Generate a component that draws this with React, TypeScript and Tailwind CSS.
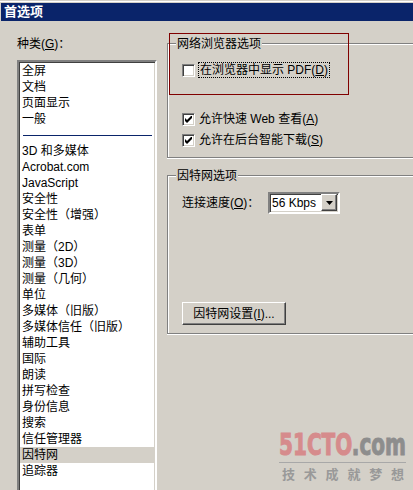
import type { ReactNode } from 'react'

const categories = [
  '3D 和多媒体',
  'Acrobat.com',
  'JavaScript',
  '安全性',
  '安全性（增强）',
  '表单',
  '测量（2D）',
  '测量（3D）',
  '测量（几何）',
  '单位',
  '多媒体（旧版）',
  '多媒体信任（旧版）',
  '辅助工具',
  '国际',
  '朗读',
  '拼写检查',
  '身份信息',
  '搜索',
  '信任管理器',
  '因特网',
  '追踪器',
]

const topCategories = ['全屏', '文档', '页面显示', '一般']

export default function App() {
  return (
    <div className="relative w-[413px] h-[490px] overflow-hidden bg-[#d4d0c8] text-black text-[12px] leading-[16px] font-['Liberation_Sans','Noto_Sans_CJK_SC',sans-serif]">
      {/* 窗口顶部 */}
      <div className="h-[1px]" />
      <div className="h-[1px] bg-white" />
      <div className="h-[1px]" />
      <div className="ml-[1px] h-[18px] bg-[#0a246a] pl-[3px] flex items-center text-white font-bold text-[13px]">
        首选项
      </div>

      <div className="flex">
        {/* 左侧：种类列表 */}
        <div className="w-[167px] shrink-0 pl-[17px]">
          <div className="mt-[17px] leading-[12px]">
            种类(<u className="underline-offset-1">G</u>)：
          </div>
          <div className="mt-[10px] w-[140px] h-[440px] bg-white border-2 border-t-[#808080] border-l-[#808080] border-r-white border-b-white shadow-[inset_1px_1px_0_#404040,inset_-1px_-1px_0_#d4d0c8]">
            <div className="pt-[1px] pl-[1px]">
              {topCategories.map((c) => (
                <ListRow key={c}>{c}</ListRow>
              ))}
              <div className="h-[16px] flex items-center px-[3px]">
                <div className="h-[1px] w-full bg-[#0a246a]" />
              </div>
              {categories.map((c) => (
                <ListRow key={c} selected={c === '因特网'}>
                  {c}
                </ListRow>
              ))}
            </div>
          </div>
        </div>

        {/* 右侧：选项 */}
        <div className="mt-[22px] w-[270px] shrink-0">
          <GroupBox title="网络浏览器选项" className="h-[115px]">
            <CheckRow className="mt-[11px]" focused>
              在浏览器中显示 PDF(<u className="underline-offset-1">D</u>)
            </CheckRow>
            <CheckRow className="mt-[33px]" checked>
              允许快速 Web 查看(<u className="underline-offset-1">A</u>)
            </CheckRow>
            <CheckRow className="mt-[5px]" checked>
              允许在后台智能下载(<u className="underline-offset-1">S</u>)
            </CheckRow>
          </GroupBox>

          <GroupBox title="因特网选项" className="mt-[17px] h-[159px]">
            <div className="mt-[9px] ml-[14px] flex items-center">
              <div className="w-[86px]">
                连接速度(<u className="underline-offset-1">O</u>)：
              </div>
              <div className="w-[72px] h-[22px] flex bg-white border-2 border-t-[#808080] border-l-[#808080] border-r-white border-b-white shadow-[inset_1px_1px_0_#404040,inset_-1px_-1px_0_#d4d0c8]">
                <div className="flex-1 pl-[2px] flex items-center">56 Kbps</div>
                <div className="w-[16px] h-[17px] mr-[1px] bg-[#d4d0c8] border border-t-white border-l-white border-r-[#404040] border-b-[#404040] shadow-[inset_-1px_-1px_0_#808080] flex items-center justify-center">
                  <svg width="7" height="4" viewBox="0 0 7 4">
                    <path d="M0 0h7L3.5 4z" fill="#000" />
                  </svg>
                </div>
              </div>
            </div>
            <button className="mt-[88px] ml-[14px] w-[104px] h-[23px] bg-[#d4d0c8] border border-t-white border-l-white border-r-[#404040] border-b-[#404040] shadow-[inset_-1px_-1px_0_#808080] flex items-center justify-center">
              因特网设置(<u className="underline-offset-1">I</u>)...
            </button>
          </GroupBox>
        </div>
      </div>

      {/* 标注红框 */}
      <div className="absolute left-[169px] top-[33px] w-[180px] h-[62px] border border-[#800000]" />

      {/* 水印 */}
      <svg
        className="absolute left-[276px] top-[420px]"
        width="134"
        height="66"
        viewBox="0 0 134 66"
      >
        <text
          x="3"
          y="35"
          fontSize="31"
          fontWeight="900"
          fontFamily="'DejaVu Sans Condensed', 'Liberation Sans', sans-serif"
          fill="#d68b8c"
          stroke="#d68b8c"
          strokeWidth="1"
          textLength="127"
          lengthAdjust="spacingAndGlyphs"
        >
          51CTO
          <tspan fill="#8d8d8d" stroke="#8d8d8d">
            .com
          </tspan>
        </text>
        <line x1="3" y1="42.5" x2="130" y2="42.5" stroke="#a8a8a8" />
        <text
          x="6"
          y="59"
          fontSize="13"
          fontWeight="bold"
          fontFamily="'Noto Sans CJK SC', sans-serif"
          fill="#999"
          textLength="122"
          lengthAdjust="spacing"
        >
          技术成就梦想
        </text>
      </svg>
    </div>
  )
}

function ListRow({ children, selected }: { children: ReactNode; selected?: boolean }) {
  return (
    <div className={selected ? 'h-[16px] pl-[2px] bg-[#d4d0c8] whitespace-nowrap' : 'h-[16px] pl-[2px] whitespace-nowrap'}>
      {children}
    </div>
  )
}

function GroupBox({ title, className, children }: { title: string; className?: string; children: ReactNode }) {
  return (
    <div className={`border-t border-l border-b border-[#808080] shadow-[inset_1px_1px_0_#fff,0_1px_0_#fff] ${className ?? ''}`}>
      <div className="-mt-[7px] ml-[8px] px-[1px] w-fit bg-[#d4d0c8] leading-[14px]">{title}</div>
      {children}
    </div>
  )
}

function CheckRow({
  children,
  checked,
  focused,
  className,
}: {
  children: ReactNode
  checked?: boolean
  focused?: boolean
  className?: string
}) {
  return (
    <div className={`ml-[14px] h-[16px] flex items-center ${className ?? ''}`}>
      <div className="w-[13px] h-[13px] bg-white border border-t-[#808080] border-l-[#808080] border-r-white border-b-white shadow-[inset_1px_1px_0_#404040,inset_-1px_-1px_0_#d4d0c8] flex items-center justify-center">
        {checked && (
          <svg width="7" height="7" viewBox="0 0 7 7">
            <path d="M0 2v3l2 2l5-5V-1L2 4z" fill="#000" />
          </svg>
        )}
      </div>
      <div
        className={
          focused
            ? 'ml-[3px] px-[1px] h-[16px] border border-dotted border-black leading-[14px] whitespace-nowrap'
            : 'ml-[4px] whitespace-nowrap'
        }
      >
        {children}
      </div>
    </div>
  )
}
